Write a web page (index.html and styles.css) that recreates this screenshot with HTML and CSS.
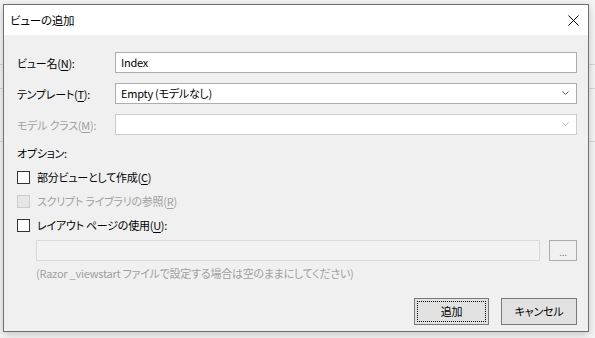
FILE: index.html
```html
<!DOCTYPE html>
<html lang="ja">
  <head>
    <meta charset="UTF-8" />
    <meta name="viewport" content="width=device-width, initial-scale=1.0" />
    <title>ビューの追加</title>
    <link rel="stylesheet" href="styles.css">
  </head>
  <body>
    <div class="dialog">
      <div class="titlebar">
        <span class="title">ビューの追加</span>
        <svg class="close" width="11" height="11" viewBox="0 0 11 11">
          <path d="M0.5 0.5 L10.5 10.5 M10.5 0.5 L0.5 10.5" stroke="#000" stroke-width="1" fill="none" />
        </svg>
      </div>

      <div class="content">
        <div class="fields">
          <span class="label">ビュー名(<u>N</u>):</span>
          <div class="textbox">Index</div>

          <span class="label">テンプレート(<u>T</u>):</span>
          <div class="combo">
            <span>Empty (モデルなし)</span>
            <svg class="chevron" width="7" height="5" viewBox="0 0 7 5">
              <path d="M0.5 0.5 L3.5 3.5 L6.5 0.5" stroke="#555" fill="none" />
            </svg>
          </div>

          <span class="label disabled">モデル クラス(<u>M</u>):</span>
          <div class="combo disabled">
            <span></span>
            <svg class="chevron" width="7" height="5" viewBox="0 0 7 5">
              <path d="M0.5 0.5 L3.5 3.5 L6.5 0.5" stroke="#bbb" fill="none" />
            </svg>
          </div>
        </div>

        <div class="group-label">オプション:</div>
        <div class="options">
          <div class="option"><span class="check"></span>部分ビューとして作成(<u>C</u>)</div>
          <div class="option disabled"><span class="check"></span>スクリプト ライブラリの参照(<u>R</u>)</div>
          <div class="option"><span class="check"></span>レイアウト ページの使用(<u>U</u>):</div>
        </div>

        <div class="layout-path">
          <div class="textbox disabled"></div>
          <div class="browse">...</div>
        </div>
        <div class="hint">(Razor _viewstart ファイルで設定する場合は空のままにしてください)</div>

        <div class="footer">
          <div class="btn default">追加</div>
          <div class="btn cancel">キャンセル</div>
        </div>
      </div>
    </div>
  </body>
</html>
```

FILE: styles.css
```css
body {
  margin: 0;
  font-family: "Noto Sans CJK JP", "Noto Sans", sans-serif;
  font-size: 11px;
  letter-spacing: -0.25px;
  font-feature-settings: "palt";
  color: #000;
  background-color: #f5f5f5;
  background-image:
    linear-gradient(#d8d8d8, #d8d8d8),
    linear-gradient(#d8d8d8, #d8d8d8),
    linear-gradient(#d8d8d8, #d8d8d8);
  background-size: 100% 1px;
  background-position: 0 64px, 0 88px, 0 141px;
  background-repeat: no-repeat;
  height: 338px;
  overflow: hidden;
}

u {
  text-decoration-thickness: 1px;
  text-underline-offset: 2px;
}

.dialog {
  box-sizing: border-box;
  width: 586px;
  height: 328px;
  margin: 4px 0 0 3px;
  border: 1px solid #6f6f6f;
  background-color: #f0f0f0;
  box-shadow: 0 2px 8px rgba(0, 0, 0, 0.22);
  display: flex;
  flex-direction: column;
}

.titlebar {
  height: 30px;
  background-color: #fff;
  display: flex;
  align-items: center;
  justify-content: space-between;
  padding: 0 9px 0 6px;
}

.title {
  font-size: 11.5px;
  line-height: 16px;
}

.close {
  display: block;
}

.content {
  flex: 1;
  padding: 17px 11px 0 13px;
  display: flex;
  flex-direction: column;
}

.fields {
  display: grid;
  grid-template-columns: 98px 1fr;
  grid-auto-rows: 21px;
  row-gap: 10px;
  align-items: center;
}

.label {
  line-height: 16px;
}

.disabled {
  color: #a0a0a0;
}

.textbox,
.combo {
  box-sizing: border-box;
  height: 21px;
  border: 1px solid #adadad;
  background-color: #fff;
  padding: 0 5px;
  line-height: 19px;
}

.combo {
  display: flex;
  align-items: center;
  justify-content: space-between;
  padding-right: 7px;
}

.combo.disabled {
  border-color: #cccccc;
}

.textbox.disabled {
  border-color: #d9d9d9;
  background-color: #f2f2f2;
}

.group-label {
  margin-top: 10px;
  line-height: 16px;
}

.options {
  margin-top: 4px;
}

.option {
  height: 24px;
  display: flex;
  align-items: center;
  line-height: 16px;
}

.check {
  box-sizing: border-box;
  width: 13px;
  height: 13px;
  border: 1px solid #333;
  background-color: #fff;
  margin-right: 7px;
}

.option.disabled .check {
  border-color: #cccccc;
  background-color: #e6e6e6;
}

.layout-path {
  display: flex;
  gap: 9px;
  margin: 3px 0 0 19px;
}

.layout-path .textbox {
  flex: 1;
}

.browse {
  box-sizing: border-box;
  width: 28px;
  height: 21px;
  border: 1px solid #adadad;
  background-color: #f0f0f0;
  color: #7a7a7a;
  font-size: 10px;
  line-height: 22px;
  text-align: center;
}

.hint {
  margin: 4px 0 0 19px;
  line-height: 16px;
  color: #a0a0a0;
}

.footer {
  margin-top: 17px;
  display: flex;
  justify-content: flex-end;
  gap: 12px;
}

.btn {
  box-sizing: border-box;
  height: 27px;
  border: 1px solid #adadad;
  background-color: #e1e1e1;
  line-height: 25px;
  text-align: center;
}

.btn.default {
  width: 75px;
  border-color: #7a7a7a;
  outline: 1px dotted #000;
  outline-offset: -4px;
}

.btn.cancel {
  width: 76px;
  border-color: #7a7a7a;
}
```
